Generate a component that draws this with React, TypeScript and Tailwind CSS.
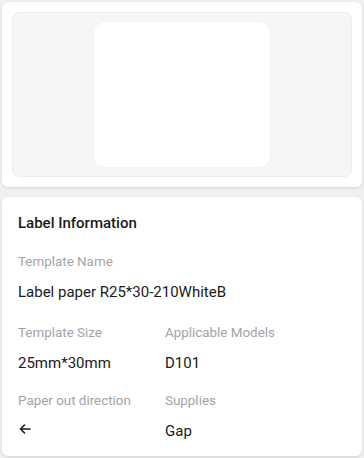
import React from 'react';

const Field: React.FC<{ label: string; children: React.ReactNode }> = ({ label, children }) => (
  <div className="flex flex-col">
    <span className="text-[13.4px] leading-[18px] text-[#a3a3a3]">{label}</span>
    <div className="mt-[11px] h-[20px] flex items-center text-[15px] leading-[20px] text-[#1a1a1a]">{children}</div>
  </div>
);

const App: React.FC = () => {
  return (
    <div className="w-[364px] h-[458px] bg-[#f0f0f0] p-[2px] flex flex-col gap-[10px] overflow-hidden" style={{ fontFamily: 'Roboto, "Noto Sans", sans-serif' }}>
      {/* Preview */}
      <div className="h-[185px] bg-white rounded-[6px] shadow-[0_1px_3px_rgba(0,0,0,0.12)] p-[10px]">
        <div className="h-full bg-[#f6f6f6] border border-[#ececec] rounded-[8px] flex justify-center items-center">
          <div className="w-[178px] h-[147px] -ml-[1px] bg-white rounded-[12px] border border-[#f3f3f3]" />
        </div>
      </div>

      {/* Info */}
      <div className="flex-1 bg-white rounded-[6px] shadow-[0_1px_3px_rgba(0,0,0,0.12)] px-[16px] pt-[16px]">
        <div className="text-[15px] leading-[20px] font-medium text-[#1a1a1a]">Label Information</div>
        <div className="mt-[20px] flex flex-col">
          <Field label="Template Name">Label paper R25*30-210WhiteB</Field>
          <div className="grid grid-cols-[147px_1fr] mt-[22px]">
            <Field label="Template Size">25mm*30mm</Field>
            <Field label="Applicable Models">D101</Field>
          </div>
          <div className="grid grid-cols-[147px_1fr] mt-[19px]">
            <Field label="Paper out direction">
              <svg width="14" height="14" viewBox="0 0 14 14" fill="none" stroke="#1a1a1a" strokeWidth="1.6" strokeLinecap="round" strokeLinejoin="round" className="-mt-[4px]">
                <path d="M12 7H2.5M6.5 3L2.5 7l4 4" />
              </svg>
            </Field>
            <Field label="Supplies">Gap</Field>
          </div>
        </div>
      </div>
    </div>
  );
};

export default App;
